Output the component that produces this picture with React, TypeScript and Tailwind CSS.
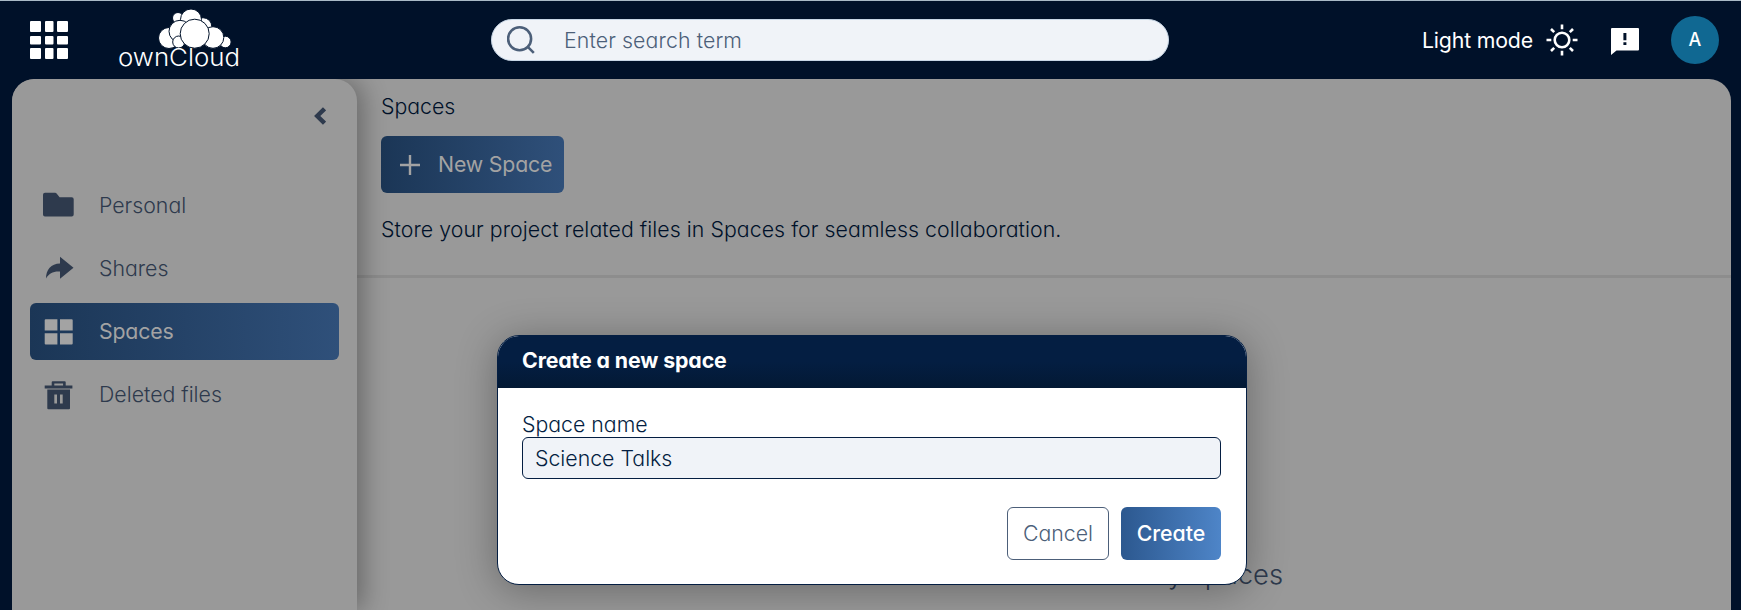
import type { ReactNode } from "react";

const navItems: { label: string; icon: ReactNode; active?: boolean }[] = [
  {
    label: "Personal",
    icon: (
      <path d="M2 2.800h10.200a2 2 0 0 1 1.400.6l3 3.800h12.100a2 2 0 0 1 2 2v15.300a2 2 0 0 1-2 2H2a2 2 0 0 1-2-2V4.800a2 2 0 0 1 2-2z" />
    ),
  },
  {
    label: "Shares",
    icon: (
      <path d="M17 3.800L30.500 14.700 17 25.800V18.600C10 18.200 6 20.500 3 25.500 3 17 8 10.500 17 10.500z" />
    ),
  },
  {
    label: "Spaces",
    icon: (
      <path d="M2.700 3.200h11.700v11.400H1.700V4.200a1 1 0 0 1 1-1zM17 3.200h11.700a1 1 0 0 1 1 1v10.400H17zM1.700 17.200h12.700v11.400H2.700a1 1 0 0 1-1-1zM17 17.200h12.700v10.400a1 1 0 0 1-1 1H17z" />
    ),
    active: true,
  },
  {
    label: "Deleted files",
    icon: (
      <path d="M8.700 6.500V3.200a1 1 0 0 1 1-1h12a1 1 0 0 1 1 1v3.300h6.700v3H1.700v-3zM11.300 4.600v1.900h8.800V4.600zM4.300 10.600H27v18.600a1 1 0 0 1-1 1H5.300a1 1 0 0 1-1-1zM11.300 15.500v9H14v-9zM17 15.500v9h2.700v-9z" />
    ),
  },
];

const Logo = () => (
  <svg
    viewBox="0 0 122 66"
    className="w-[122px] h-[66px] overflow-visible"
    fill="#fff"
    stroke="#001129"
    strokeWidth="1"
  >
    <circle cx="59" cy="11" r="5.5" />
    <circle cx="84" cy="19.500" r="8.8" />
    <circle cx="72" cy="12.500" r="10.5" />
    <circle cx="50" cy="31" r="10.500" />
    <circle cx="106.300" cy="35" r="5.800" />
    <circle cx="61" cy="24.300" r="11" />
    <circle cx="94" cy="30.500" r="10.800" />
    <circle cx="59.700" cy="35" r="6" />
    <circle cx="75.700" cy="26.700" r="14.500" />
    <text
      x="-1"
      y="58.500"
      textLength="122"
      lengthAdjust="spacingAndGlyphs"
      stroke="none"
      className="text-[24px] leading-none font-light"
    >
      ownCloud
    </text>
  </svg>
);

const TopBar = () => (
  <header className="h-[79px] shrink-0 border-t border-[#a9bac6] flex items-center">
    <svg viewBox="0 0 38 38" className="w-[38px] h-[38px] ml-[30px]" fill="#fff">
      {[
        [0, 11],
        [15, 8.5],
        [27, 11],
      ].map(([x, w]) =>
        [
          [0, 11],
          [15, 8.5],
          [27, 11],
        ].map(([y, h]) => (
          <rect key={`${x}-${y}`} x={x} y={y} width={w} height={h} rx="1" />
        ))
      )}
    </svg>
    <div className="ml-[51px]">
      <Logo />
    </div>
    <div className="ml-[250px] w-[678px] h-[42px] rounded-full bg-[#f0f3f8] border border-[#c8d7e6] flex items-center text-[#4c5f79]">
      <svg
        viewBox="0 0 28 28"
        className="w-7 h-7 ml-[15px]"
        fill="none"
        stroke="currentColor"
        strokeWidth="2.6"
      >
        <circle cx="12.600" cy="12.800" r="11.5" />
        <path d="M20.300 20.300l6.500 6.500" />
      </svg>
      <span className="ml-[29px] font-light tracking-[0.005em]">
        Enter search term
      </span>
    </div>
    <span className="ml-auto text-white tracking-[-0.008em]">Light mode</span>
    <svg
      viewBox="0 0 32 32"
      className="w-8 h-8 ml-[13px]"
      fill="none"
      stroke="#fff"
      strokeWidth="2.6"
    >
      <circle cx="16" cy="16" r="7.3" />
      <path d="M16 0.500v4.800M16 26.700v4.800M0.500 16h4.800M26.700 16h4.800M5 5l3.200 3.200M23.800 23.800l3.200 3.200M5 27l3.200-3.200M23.800 8.200l3.200-3.200" />
    </svg>
    <svg viewBox="0 0 28 28" className="w-7 h-7 ml-[33px] mt-[3px]" fill="#fff">
      <path
        fillRule="evenodd"
        d="M1 0h26a1 1 0 0 1 1 1v20.500a1 1 0 0 1-1 1H5.500L0 27V1a1 1 0 0 1 1-1zM12.400 5v7.300h3V5zM12.400 14.300v2.700h3v-2.700z"
      />
    </svg>
    <div className="ml-8 mr-[22px] w-12 h-12 rounded-full bg-[#106892] flex items-center justify-center text-white text-lg font-medium">
      A
    </div>
  </header>
);

const Sidebar = () => (
  <aside className="relative w-[345px] shrink-0 rounded-t-[22px] bg-[#999] shadow-[6px_0_26px_rgba(0,0,0,0.32)] px-[18px]">
    <div className="flex justify-end pt-7 pr-[13px]">
      <svg
        viewBox="0 0 12 18"
        className="w-3 h-[18px]"
        fill="none"
        stroke="#2e3a4d"
        strokeWidth="4.4"
      >
        <path d="M10.500 1.800L3.200 9l7.300 7.200" />
      </svg>
    </div>
    <nav className="mt-[52px] flex flex-col gap-[6px]">
      {navItems.map(({ label, icon, active }) => (
        <a
          key={label}
          className={`flex items-center h-[57px] pl-[13px] gap-6 rounded-md ${
            active
              ? "bg-linear-to-r from-[#1b3656] to-[#2f507a] text-[#a3a3a3] tracking-[-0.008em]"
              : "text-[#2e3a4d] font-light"
          }`}
        >
          <svg
            viewBox="0 0 32 32"
            className="w-8 h-8"
            fill="currentColor"
            fillRule="evenodd"
          >
            {icon}
          </svg>
          <span className="pb-px">{label}</span>
        </a>
      ))}
    </nav>
  </aside>
);

const Spaces = () => (
  <main className="flex-1 text-[#001129]">
    <div className="pl-6 pt-[13px] h-[196px]">
      <h1 className="font-light">Spaces</h1>
      <button className="mt-4 flex items-center w-[183px] h-[57px] rounded-md bg-linear-to-r from-[#1b3656] to-[#2f507a] text-[#a3a3a3] pl-[19px] gap-[18px] whitespace-nowrap tracking-[-0.008em]">
        <svg
          viewBox="0 0 20 20"
          className="w-5 h-5 shrink-0"
          stroke="currentColor"
          strokeWidth="2.4"
        >
          <path d="M10 0v20M0 10h20" />
        </svg>
        <span className="pb-px">New Space</span>
      </button>
      <p className="mt-[22px] font-light tracking-[0.0028em]">
        Store your project related files in Spaces for seamless collaboration.
      </p>
    </div>
    <div className="h-[3px] bg-[#8d8d8d]" />
    <p className="mt-[277px] text-center text-[27.4px] leading-[39px] font-light text-[#2e3a4d]">
      You don't have access to any spaces
    </p>
  </main>
);

const CreateSpaceModal = () => (
  <div className="absolute left-[497px] top-[335px] w-[750px] h-[250px] flex flex-col rounded-[22px] border border-[#041e42] bg-white overflow-hidden shadow-[0_5px_40px_rgba(0,0,0,0.32)]">
    <div className="h-[52px] shrink-0 px-6 pb-1 flex items-center bg-linear-to-b from-[#041e42] from-50% to-[#031934] text-white font-bold tracking-[-0.005em]">
      Create a new space
    </div>
    <div className="pl-6 pr-[25px] pt-[22px] text-[#041e42] font-light">
      <label className="block">Space name</label>
      <div className="h-[42px] -mt-px px-3 flex items-center rounded-md border border-[#041e42] bg-[#f0f3f8]">
        Science Talks
      </div>
    </div>
    <div className="mt-7 pr-[25px] flex justify-end gap-3">
      <button className="w-[102px] h-[53px] pb-px rounded-md border border-[#4c5f79] text-[#4c5f79] font-light">
        Cancel
      </button>
      <button className="w-[100px] h-[53px] pb-px rounded-md bg-linear-to-r from-[#2c588f] to-[#4e85c8] text-white font-medium">
        Create
      </button>
    </div>
  </div>
);

const App = () => (
  <div className="relative h-[610px] flex flex-col overflow-hidden bg-[#001129] font-['Inter',sans-serif] text-[21.3px] leading-7 [font-feature-settings:'cv11']">
    <TopBar />
    <div className="flex flex-1 ml-3 mr-[10px] rounded-t-[22px] bg-[#999] overflow-hidden">
      <Sidebar />
      <Spaces />
    </div>
    <CreateSpaceModal />
  </div>
);

export default App;
